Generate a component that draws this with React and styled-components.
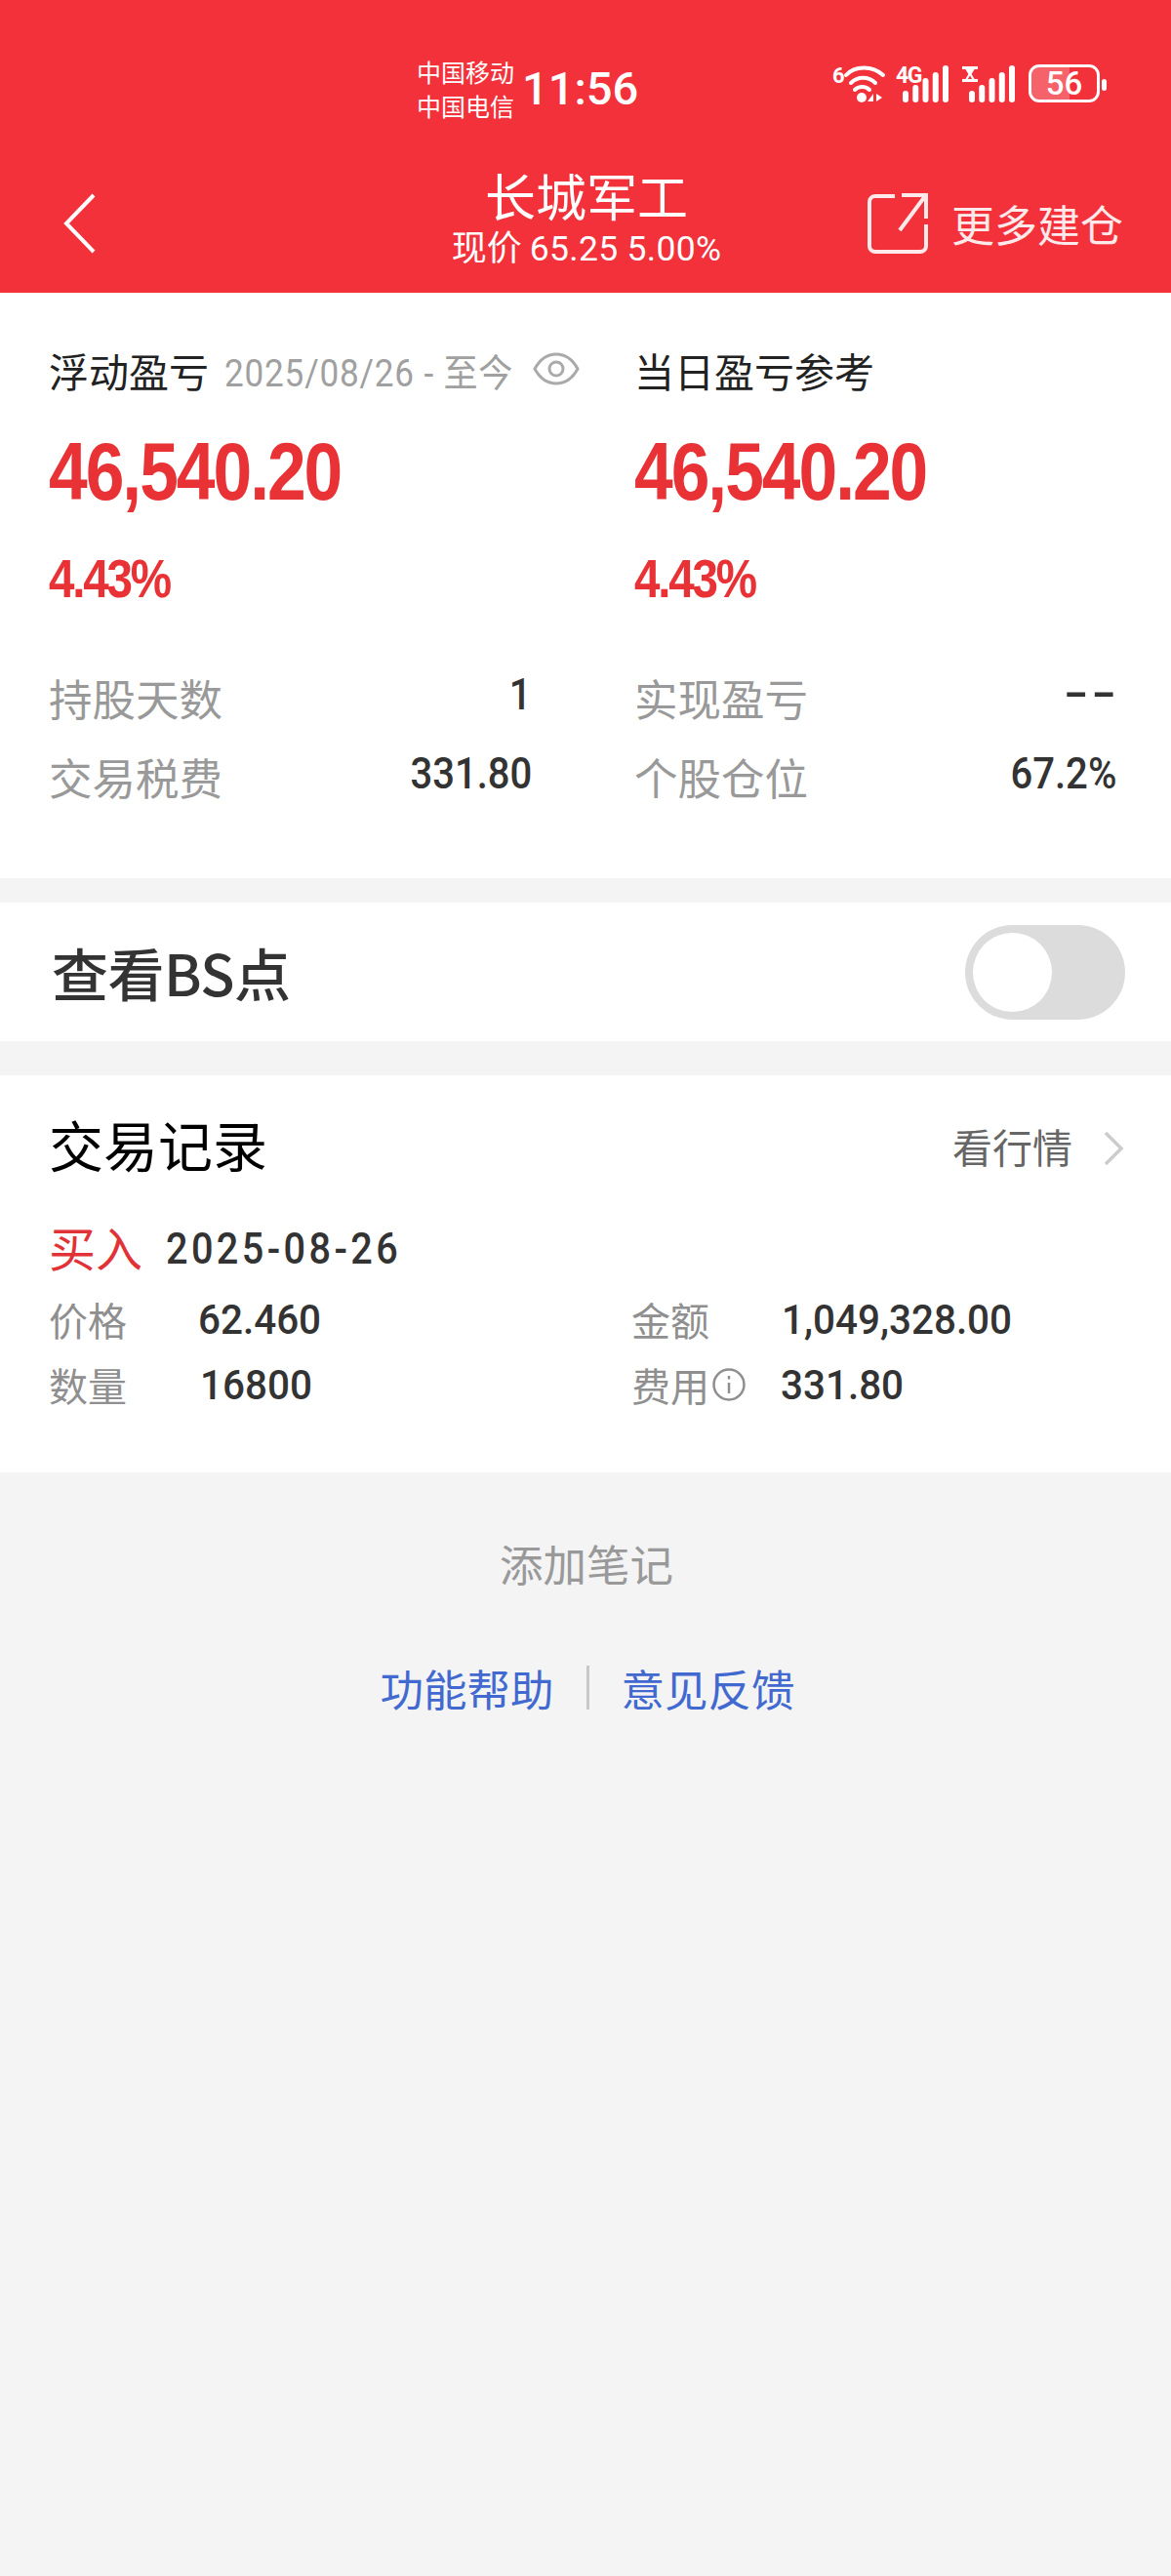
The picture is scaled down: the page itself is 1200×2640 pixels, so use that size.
import React from "react";
import styled, { createGlobalStyle } from "styled-components";

const cjk = `"Noto Sans CJK SC", "Noto Sans", sans-serif`;
const latin = `Roboto, "Noto Sans CJK SC", sans-serif`;

const GlobalStyle = createGlobalStyle`
  html, body {
    margin: 0;
    padding: 0;
    background: #f4f4f5;
  }
  * {
    box-sizing: border-box;
  }
`;

const Page = styled.div`
  width: 1200px;
  height: 2640px;
  background: #f4f4f5;
  font-family: ${cjk};
  overflow: hidden;
`;

const Header = styled.header`
  height: 300px;
  background: #f2313b;
  color: #fff;
`;

const StatusBar = styled.div`
  height: 130px;
  padding: 56px 66px 0 427px;
  display: flex;
  align-items: flex-start;
  justify-content: space-between;
`;

const Clock = styled.div`
  display: flex;
  align-items: center;
  gap: 8px;
`;

const Carriers = styled.div`
  display: flex;
  flex-direction: column;
  font-size: 25px;
  line-height: 35px;
`;

const Time = styled.div`
  font-family: Roboto, sans-serif;
  font-size: 47px;
  font-weight: 500;
  line-height: 70px;
`;

const StatusIcons = styled.div`
  display: flex;
  align-items: flex-start;
  gap: 11px;
  padding-top: 10px;
`;

const StatusSvg = styled.svg`
  display: block;
  overflow: visible;
`;

const Battery = styled.div`
  position: relative;
  width: 73px;
  height: 39px;
  margin-right: 7px;
  border: 3px solid #fff;
  border-radius: 11px;
  background: linear-gradient(90deg, rgba(255, 255, 255, 0.24) 58%, transparent 58%);
  font-family: Roboto, sans-serif;
  font-size: 33px;
  font-weight: 500;
  line-height: 33px;
  text-align: center;
  &::after {
    content: "";
    position: absolute;
    top: 12px;
    right: -10px;
    width: 5px;
    height: 12px;
    border-radius: 3px;
    background: #fff;
  }
`;

const NavBar = styled.nav`
  height: 170px;
  padding: 28px 49px 0 65px;
  display: flex;
  align-items: center;
  justify-content: space-between;
  position: relative;
`;

const BackButton = styled.div`
  width: 34px;
  height: 62px;
  display: flex;
`;

const TitleBlock = styled.div`
  position: absolute;
  left: 2px;
  right: 0;
  top: 39px;
  display: flex;
  flex-direction: column;
  align-items: center;
`;

const Title = styled.div`
  font-size: 52px;
  line-height: 62px;
`;

const Subtitle = styled.div`
  font-size: 36px;
  line-height: 40px;
  span {
    font-family: ${latin};
    font-size: 35.5px;
    letter-spacing: 0.3px;
  }
`;

const MoreAction = styled.div`
  display: flex;
  align-items: center;
  gap: 24px;
  font-size: 44px;
  color: #ffe9ea;
`;

const Panel = styled.section`
  background: #fff;
  margin-top: ${(p) => p.$gap || 0}px;
`;

const Summary = styled(Panel)`
  height: 600px;
  padding: 54px 50px 0;
  display: grid;
  grid-template-columns: 494px 493px;
  column-gap: 106px;
`;

const Column = styled.div`
  display: flex;
  flex-direction: column;
`;

const LabelRow = styled.div`
  display: flex;
  align-items: center;
  height: 50px;
  font-size: 41px;
  color: #222;
  white-space: nowrap;
`;

const DateRange = styled.span`
  margin: 0 -33px 0 16px;
  font-family: ${latin};
  font-size: 39px;
  color: #a0a0a0;
  letter-spacing: 0.9px;
  transform: scaleX(0.9);
  transform-origin: left center;
`;

const EyeIcon = styled.svg`
  margin-left: 20px;
  margin-top: -2px;
  flex: none;
`;

const BigNumber = styled.div`
  margin-top: 29px;
  height: 100px;
  font-family: "Liberation Sans", sans-serif;
  font-weight: bold;
  font-size: 84px;
  line-height: 100px;
  color: #e83235;
  letter-spacing: -2.4px;
  transform: scaleX(0.85);
  transform-origin: left center;
  white-space: nowrap;
`;

const Percent = styled.div`
  margin-top: 25px;
  height: 70px;
  font-family: "Liberation Sans", sans-serif;
  font-weight: bold;
  font-size: 56px;
  line-height: 70px;
  color: #e83235;
  letter-spacing: -2.6px;
  transform: scaleX(0.85);
  transform-origin: left center;
`;

const StatList = styled.div`
  margin-top: 46px;
  display: grid;
  grid-auto-rows: 81px;
`;

const StatRow = styled.div`
  display: flex;
  align-items: center;
  justify-content: space-between;
`;

const StatLabel = styled.span`
  font-size: 44.5px;
  color: #999;
`;

const StatValue = styled.span`
  font-family: Roboto, sans-serif;
  font-size: 45px;
  font-weight: 500;
  color: #333;
  margin: -6px -1px 0 0;
  transform: scaleX(0.89);
  transform-origin: right center;
`;

const DashValue = styled(StatValue)`
  font-size: 40px;
  font-weight: 700;
  letter-spacing: 1px;
  transform: scaleX(1.7);
  margin: -9px -4px 0 0;
`;

const ToggleRow = styled(Panel)`
  height: 142px;
  padding: 0 47px 0 53px;
  display: flex;
  align-items: center;
  justify-content: space-between;
`;

const ToggleLabel = styled.div`
  font-size: 58px;
  font-weight: 500;
  color: #333;
  letter-spacing: -0.5px;
`;

const Toggle = styled.div`
  width: 164px;
  height: 97px;
  padding: 8px;
  border-radius: 49px;
  background: #dcdcdc;
`;

const Knob = styled.div`
  width: 81px;
  height: 81px;
  border-radius: 50%;
  background: #fff;
`;

const Records = styled(Panel)`
  height: 407px;
  padding: 35px 48px 0 50px;
`;

const RecordsHead = styled.div`
  display: flex;
  align-items: center;
  justify-content: space-between;
  height: 70px;
`;

const RecordsTitle = styled.div`
  font-size: 56px;
  color: #000;
  margin-top: -2px;
`;

const QuoteLink = styled.div`
  display: flex;
  align-items: center;
  gap: 31px;
  font-size: 41px;
  color: #666;
  padding-top: 4px;
`;

const QuoteChevron = styled.svg`
  margin-top: 5px;
`;

const TradeLine = styled.div`
  display: flex;
  align-items: center;
  gap: 24px;
  height: 70px;
  margin-top: 36px;
`;

const TradeSide = styled.span`
  font-size: 48px;
  color: #e03237;
  margin-top: -2px;
`;

const TradeDate = styled.span`
  font-family: Roboto, sans-serif;
  font-size: 44px;
  font-weight: 500;
  color: #333;
  letter-spacing: 3.8px;
  margin-top: 3px;
  transform: scaleX(0.9);
  transform-origin: left center;
`;

const TradeGrid = styled.div`
  display: grid;
  grid-template-columns: 597px 1fr;
  grid-auto-rows: 67px;
  margin-top: 5px;
`;

const TradeCell = styled.div`
  display: flex;
  align-items: center;
`;

const TradeLabel = styled.span`
  display: flex;
  align-items: center;
  width: ${(p) => p.$width}px;
  font-size: 40px;
  color: #8f8f8f;
`;

const TradeValue = styled.span`
  font-family: Roboto, sans-serif;
  font-size: 43px;
  font-weight: 500;
  color: #333;
  margin-top: 1px;
  transform: scaleX(0.94);
  transform-origin: left center;
`;

const Footer = styled.div`
  display: flex;
  flex-direction: column;
  align-items: center;
  padding-left: 2px;
`;

const AddNote = styled.div`
  margin-top: 63px;
  font-size: 44.5px;
  line-height: 60px;
  color: #999;
`;

const HelpLinks = styled.div`
  margin-top: 68px;
  display: flex;
  align-items: center;
  gap: 33px;
  padding-left: 2px;
  font-size: 44.5px;
  line-height: 60px;
  color: #4169d0;
`;

const Divider = styled.i`
  width: 3px;
  height: 45px;
  background: #c8c8c8;
  margin-top: -2px;
`;

const barHeights = [12, 18, 25, 31, 38];

function SignalBars({ label, hourglass }) {
  return (
    <StatusSvg width="57" height="42" viewBox="0 0 57 42" fill="#fff">
      {barHeights.map((h, i) => (
        <rect key={i} x={7 + i * 10.25} y={39 - h} width="6" height={h} rx="3" />
      ))}
      {hourglass ? (
        <path d="M0 2h16v3h-3.4l-3 5 3 5H16v3H0v-3h3.4l3-5-3-5H0z M5.8 15h4.4L8 11.4z" fillRule="evenodd" />
      ) : (
        <text x="0" y="19" fontFamily="Roboto, sans-serif" fontWeight="700" fontSize="23" letterSpacing="-1.5">{label}</text>
      )}
    </StatusSvg>
  );
}

function WifiIcon() {
  return (
    <StatusSvg width="54" height="42" viewBox="0 0 54 42" fill="none">
      <text x="0" y="19" fill="#fff" fontFamily="Roboto, sans-serif" fontWeight="700" fontSize="22">6</text>
      <path d="M14 11C23 1 41 1 52 11" stroke="#fff" strokeWidth="4" strokeLinecap="round" />
      <path d="M19 19C26 12 37 12 44 19" stroke="#fff" strokeWidth="4" strokeLinecap="round" />
      <path d="M23 26C27 22 34 22 38 26" stroke="#fff" strokeWidth="4" strokeLinecap="round" />
      <circle cx="30" cy="34" r="5" fill="#fff" />
      <path d="M42 30v8h-6zM45 30v8l6-4z" fill="#fff" />
    </StatusSvg>
  );
}

function ShareIcon() {
  return (
    <svg width="62" height="62" viewBox="0 0 62 62" fill="none" stroke="#ffe9ea" strokeWidth="4" style={{ display: "block" }}>
      <path d="M28 3H8a6 6 0 0 0-6 6v45a6 6 0 0 0 6 6h46a6 6 0 0 0 6-6V32" />
      <path d="M35 2h25v24" />
      <path d="M59 3L33 38" />
    </svg>
  );
}

function SummaryColumn({ children, stats }) {
  return (
    <Column>
      <LabelRow>{children}</LabelRow>
      <BigNumber>46,540.20</BigNumber>
      <Percent>4.43%</Percent>
      <StatList>
        {stats.map(([label, value]) => (
          <StatRow key={label}>
            <StatLabel>{label}</StatLabel>
            {value === "--" ? <DashValue>{value}</DashValue> : <StatValue>{value}</StatValue>}
          </StatRow>
        ))}
      </StatList>
    </Column>
  );
}

export default function App() {
  return (
    <Page>
      <GlobalStyle />
      <Header>
        <StatusBar>
          <Clock>
            <Carriers>
              <span>中国移动</span>
              <span>中国电信</span>
            </Carriers>
            <Time>11:56</Time>
          </Clock>
          <StatusIcons>
            <WifiIcon />
            <SignalBars label="4G" />
            <SignalBars hourglass />
            <Battery>56</Battery>
          </StatusIcons>
        </StatusBar>
        <NavBar>
          <BackButton>
            <svg width="34" height="62" viewBox="0 0 34 62" fill="none" stroke="#fff" strokeWidth="4">
              <path d="M31 2L3 31l28 29" />
            </svg>
          </BackButton>
          <TitleBlock>
            <Title>长城军工</Title>
            <Subtitle>现价 <span>65.25 5.00%</span></Subtitle>
          </TitleBlock>
          <MoreAction>
            <ShareIcon />
            <span>更多建仓</span>
          </MoreAction>
        </NavBar>
      </Header>

      <Summary>
        <SummaryColumn stats={[["持股天数", "1"], ["交易税费", "331.80"]]}>
          浮动盈亏
          <DateRange>2025/08/26 - 至今</DateRange>
          <EyeIcon width="48" height="36" viewBox="0 0 48 36" fill="none" stroke="#aaa" strokeWidth="3">
            <path d="M2 18C8 7 15 3 24 3s16 4 22 15c-6 11-13 15-22 15S8 29 2 18z" />
            <circle cx="24" cy="18" r="7" />
          </EyeIcon>
        </SummaryColumn>
        <SummaryColumn stats={[["实现盈亏", "--"], ["个股仓位", "67.2%"]]}>
          当日盈亏参考
        </SummaryColumn>
      </Summary>

      <ToggleRow $gap={25}>
        <ToggleLabel>查看BS点</ToggleLabel>
        <Toggle>
          <Knob />
        </Toggle>
      </ToggleRow>

      <Records $gap={35}>
        <RecordsHead>
          <RecordsTitle>交易记录</RecordsTitle>
          <QuoteLink>
            <span>看行情</span>
            <QuoteChevron width="22" height="36" viewBox="0 0 22 36" fill="none" stroke="#ccc" strokeWidth="3.5">
              <path d="M3 2l16 16L3 34" />
            </QuoteChevron>
          </QuoteLink>
        </RecordsHead>
        <TradeLine>
          <TradeSide>买入</TradeSide>
          <TradeDate>2025-08-26</TradeDate>
        </TradeLine>
        <TradeGrid>
          <TradeCell>
            <TradeLabel $width={153}>价格</TradeLabel>
            <TradeValue>62.460</TradeValue>
          </TradeCell>
          <TradeCell>
            <TradeLabel $width={154}>金额</TradeLabel>
            <TradeValue>1,049,328.00</TradeValue>
          </TradeCell>
          <TradeCell>
            <TradeLabel $width={155}>数量</TradeLabel>
            <TradeValue>16800</TradeValue>
          </TradeCell>
          <TradeCell>
            <TradeLabel $width={153}>
              费用
              <svg width="36" height="36" viewBox="0 0 36 36" fill="none" stroke="#8f8f8f" strokeWidth="2.5" style={{ marginLeft: 2 }}>
                <circle cx="18" cy="18" r="15.5" />
                <path d="M18 16v11M18 9v3.5" />
              </svg>
            </TradeLabel>
            <TradeValue>331.80</TradeValue>
          </TradeCell>
        </TradeGrid>
      </Records>

      <Footer>
        <AddNote>添加笔记</AddNote>
        <HelpLinks>
          <span>功能帮助</span>
          <Divider />
          <span>意见反馈</span>
        </HelpLinks>
      </Footer>
    </Page>
  );
}
